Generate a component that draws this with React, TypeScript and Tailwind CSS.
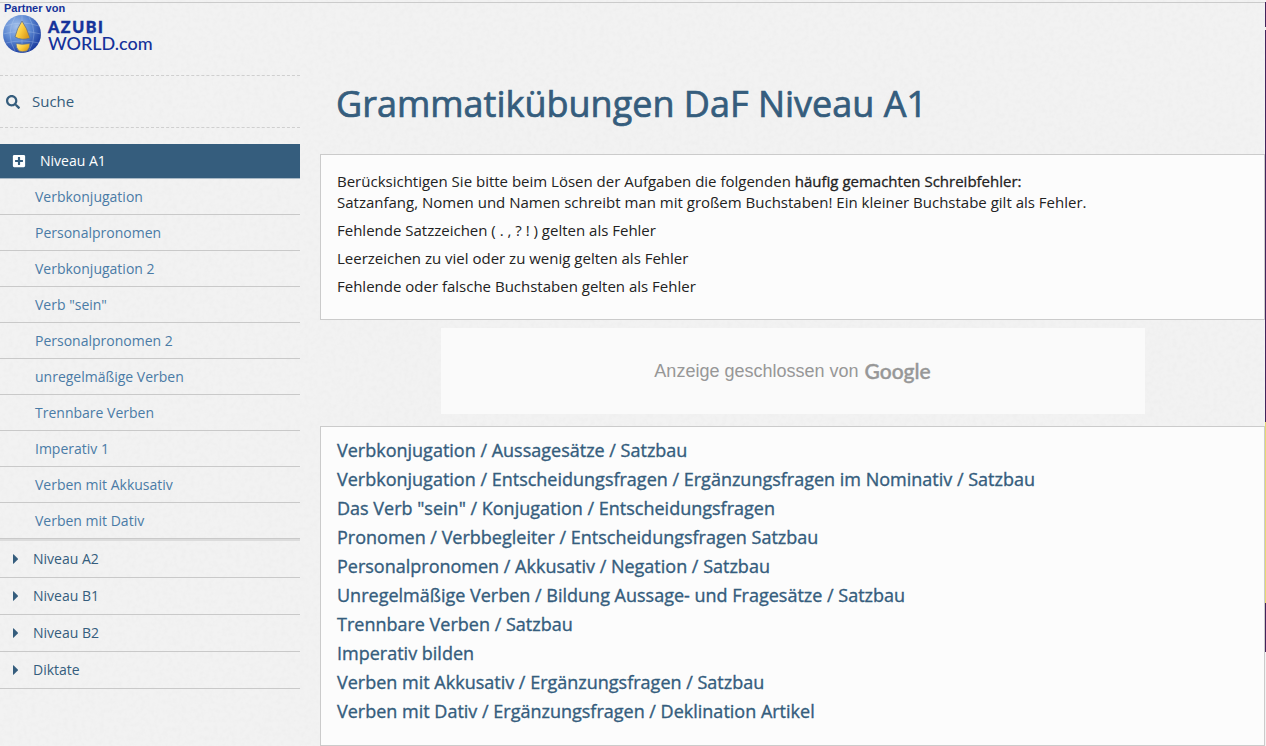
import React from 'react';
import { FaSearch, FaPlusSquare } from 'react-icons/fa';

const exercises = [
  'Verbkonjugation',
  'Personalpronomen',
  'Verbkonjugation 2',
  'Verb "sein"',
  'Personalpronomen 2',
  'unregelmäßige Verben',
  'Trennbare Verben',
  'Imperativ 1',
  'Verben mit Akkusativ',
  'Verben mit Dativ'
];

const levels = ['Niveau A2', 'Niveau B1', 'Niveau B2', 'Diktate'];

const topics = [
  'Verbkonjugation / Aussagesätze / Satzbau',
  'Verbkonjugation / Entscheidungsfragen / Ergänzungsfragen im Nominativ / Satzbau',
  'Das Verb "sein" / Konjugation / Entscheidungsfragen',
  'Pronomen / Verbbegleiter / Entscheidungsfragen Satzbau',
  'Personalpronomen / Akkusativ / Negation / Satzbau',
  'Unregelmäßige Verben / Bildung Aussage- und Fragesätze / Satzbau',
  'Trennbare Verben / Satzbau',
  'Imperativ bilden',
  'Verben mit Akkusativ / Ergänzungsfragen / Satzbau',
  'Verben mit Dativ / Ergänzungsfragen / Deklination Artikel'
];

function PaperTexture() {
  return (
    <svg className="absolute inset-0 -z-10 h-full w-full" aria-hidden="true">
      <filter id="paper">
        <feTurbulence type="fractalNoise" baseFrequency="0.22" numOctaves="3" seed="4" />
        <feColorMatrix values="0 0 0 0 0.5  0 0 0 0 0.5  0 0 0 0 0.5  0.13 0 0 0 -0.05" />
      </filter>
      <rect width="100%" height="100%" filter="url(#paper)" />
    </svg>
  );
}

function Globe() {
  return (
    <svg className="h-10 w-10 shrink-0" viewBox="0 0 40 40" aria-hidden="true">
      <defs>
        <radialGradient id="sea" cx="0.36" cy="0.3" r="0.75">
          <stop offset="0" stopColor="#a3c0ea" />
          <stop offset="0.5" stopColor="#5c88d2" />
          <stop offset="1" stopColor="#16379c" />
        </radialGradient>
        <linearGradient id="sail" x1="0" x2="1" y1="0" y2="0.6">
          <stop offset="0" stopColor="#fff0a0" />
          <stop offset="0.55" stopColor="#fbcb3c" />
          <stop offset="1" stopColor="#d99a1c" />
        </linearGradient>
      </defs>
      <circle cx="20" cy="20" r="19" fill="url(#sea)" />
      <g fill="none" stroke="#c3d6f4" strokeWidth="0.6" opacity="0.5">
        <path d="M3 12Q20 6 37 12M1 20Q20 15 39 20M4 29Q20 25 37 29" />
        <path d="M13 3Q3 20 13 37M20 1V39M27 3Q37 20 27 37" />
      </g>
      <path d="M20 7Q25 14 28 24Q20 27 13 23Q15 14 20 7Z" fill="url(#sail)" stroke="#5a6f92" strokeWidth="0.8" />
      <path d="M14 29.500Q20 31 28 29.500Q28 34 25 37Q20 38.500 17 37Q14 34 14 29.500Z" fill="url(#sail)" stroke="#5a6f92" strokeWidth="0.8" />
    </svg>
  );
}

function Logo() {
  return (
    <a href="#" className="block h-18 text-[#15329a]">
      <span className="block pl-1 font-[Liberation_Sans,sans-serif] text-[11px] leading-[11px] font-bold">
        Partner von
      </span>
      <span className="flex items-center gap-1.5 pl-0.5">
        <Globe />
        <span className="block pt-0.5 font-[Lato,sans-serif] text-lg leading-4">
          <span className="block text-base leading-4 font-black tracking-widest [-webkit-text-stroke:0.03em]">
            AZUBI
          </span>
          <span className="block font-medium">WORLD.com</span>
        </span>
      </span>
    </a>
  );
}

function Caret() {
  return (
    <svg className="h-2.5 w-[5px]" viewBox="0 0 5 10" fill="currentColor" aria-hidden="true">
      <path d="M0 0.500Q0 0 0.500 0.300L4.800 4.500Q5 5 4.800 5.500L0.500 9.700Q0 10 0 9.500Z" />
    </svg>
  );
}

function Sidebar() {
  return (
    <aside className="w-[300px] shrink-0 text-sm text-[#355d7d]">
      <Logo />
      <button
        type="button"
        className="flex h-[53px] w-full items-center gap-3 border-y border-dashed border-[#cfcfcf] pl-1.5 text-left text-[15px]"
      >
        <FaSearch className="h-3.5 w-3.5" />
        Suche
      </button>
      <nav className="mt-4">
        <a
          href="#"
          className="flex h-[35px] items-center gap-3.5 border-b border-[#a9b9c6] bg-[#355d7d] pl-3 text-white"
        >
          <FaPlusSquare className="h-3.5 w-3.5" />
          Niveau A1
        </a>
        <ul className="border-b-2 border-[#dcdcdc]">
          {exercises.map((item) => (
            <li key={item} className="border-b border-[#c9c9c9]">
              <a href="#" className="block pl-[35px] leading-[35px] text-[#4a7ba6]">
                {item}
              </a>
            </li>
          ))}
        </ul>
        <ul>
          {levels.map((item) => (
            <li key={item} className="border-b border-[#c9c9c9]">
              <a href="#" className="flex items-center gap-[15px] pl-[13px] leading-9">
                <Caret />
                {item}
              </a>
            </li>
          ))}
        </ul>
      </nav>
    </aside>
  );
}

function GoogleWordmark() {
  return (
    <span className="font-[Lato,sans-serif] text-[21px] font-medium [-webkit-text-stroke:0.02em]">
      Google
    </span>
  );
}

// sliver of the neighbouring window along the right edge
function EdgeStrip() {
  return (
    <div className="flex w-px shrink-0 flex-col">
      <div className="h-[25px] bg-[#43235b]" />
      <div className="h-[3px] bg-[#eeeeee]" />
      <div className="h-[392px] bg-[#43235b]" />
      <div className="h-[181px] bg-[#e6d873]" />
      <div className="h-[49px] bg-[#43235b]" />
      <div className="grow bg-[#f3f3f3]" />
    </div>
  );
}

export default function App() {
  return (
    <div className="relative isolate flex min-h-screen bg-[#f2f2f2] pt-0.5 font-[Open_Sans,sans-serif]">
      <PaperTexture />
      <div className="flex grow gap-5 border-t border-[#cbcbcb]">
        <Sidebar />
        <main className="grow">
          <h1 className="px-4 pt-[74px] pb-[23px] text-4xl leading-[54px] text-[#355d7d] [-webkit-text-stroke:0.02em]">
            Grammatikübungen DaF Niveau A1
          </h1>

          <section className="space-y-[7px] border border-[#cbcbcb] bg-[#fcfcfc] px-4 pt-4 pb-[22px] text-[15px] leading-[21px] text-[#222222]">
            <p>
              Berücksichtigen Sie bitte beim Lösen der Aufgaben die folgenden{' '}
              <strong className="font-normal [-webkit-text-stroke:0.02em]">
                häufig gemachten Schreibfehler:
              </strong>
              <br />
              Satzanfang, Nomen und Namen schreibt man mit großem Buchstaben! Ein kleiner Buchstabe gilt als Fehler.
            </p>
            <p>Fehlende Satzzeichen ( . , ? ! ) gelten als Fehler</p>
            <p>Leerzeichen zu viel oder zu wenig gelten als Fehler</p>
            <p>Fehlende oder falsche Buchstaben gelten als Fehler</p>
          </section>

          <div className="mx-auto mt-2 mb-3 flex h-[86px] w-[704px] items-center justify-center gap-1.5 bg-[#fafafa] font-[Liberation_Sans,sans-serif] text-lg text-[#979797]">
            <span>Anzeige geschlossen von</span>
            <GoogleWordmark />
          </div>

          <section className="border border-[#cbcbcb] bg-[#fcfcfc] px-4 pt-[9px] pb-[19px]">
            <ul className="text-lg leading-[29px] text-[#355d7d] [-webkit-text-stroke:0.02em]">
              {topics.map((topic) => (
                <li key={topic}>
                  <a href="#">{topic}</a>
                </li>
              ))}
            </ul>
          </section>
        </main>
      </div>
      <EdgeStrip />
    </div>
  );
}
